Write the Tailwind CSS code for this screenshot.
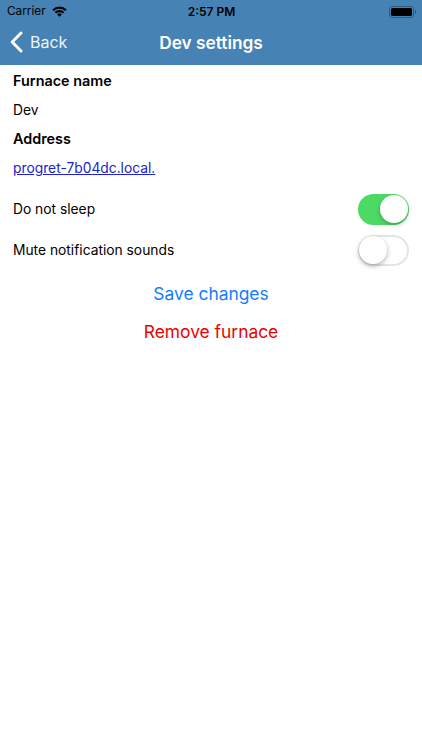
<!doctype html>
<html><head><meta charset="utf-8"><script src="https://cdn.jsdelivr.net/npm/@tailwindcss/browser@4"></script></head>
<body class="bg-white font-['Inter','Liberation_Sans',sans-serif]">
<div class="w-[422px] h-[750px] bg-white overflow-hidden flex flex-col">
  <header class="bg-[#4682b4] h-[65px] flex flex-col">
    <div class="h-[21px] mt-[1px] pl-[7px] pr-[6px] grid grid-cols-3 items-center text-[12px] text-black">
      <div class="flex items-center gap-[6px]"><span class="text-[11.8px]">Carrier</span>
        <svg width="15" height="11" viewBox="0 0 15 11"><path d="M0.3 3.6A10.2 10.2 0 0 1 14.7 3.6L13.2 5.1A8.1 8.1 0 0 0 1.8 5.1Z M2.7 6A6.8 6.8 0 0 1 12.3 6L10.8 7.5A4.7 4.7 0 0 0 4.2 7.5Z M5.1 8.4A3.4 3.4 0 0 1 9.9 8.4L7.5 10.8Z" fill="#000"/></svg>
      </div>
      <div class="text-center font-semibold whitespace-nowrap">2:57 PM</div>
      <div class="flex justify-end items-center">
        <div class="w-[25px] h-[12px] rounded-[3px] border border-[#2c5a80] p-[1px]"><div class="w-full h-full bg-black rounded-[1.5px]"></div></div>
        <div class="w-[1px] h-[4px] ml-[1px] bg-[#2c5a80]"></div>
      </div>
    </div>
    <div class="relative flex-1 flex items-center justify-center pb-[2px]">
      <div class="absolute left-[10px] top-[8px] flex items-center gap-[7px] text-white text-[16px]">
        <svg width="13" height="22" viewBox="0 0 13 22" fill="none"><path d="M11 2 2.2 11 11 20" stroke="#fff" stroke-width="2.9" stroke-linecap="round" stroke-linejoin="round"/></svg>
        <span class="text-[#eef4fa]">Back</span>
      </div>
      <h1 class="text-white text-[17.3px] font-semibold">Dev settings</h1>
    </div>
  </header>
  <main class="px-[13px] text-black text-[13.8px] flex flex-col">
    <p class="font-semibold text-[14.4px] leading-[20px] mt-[6px]">Furnace name</p>
    <p class="leading-[20px] mt-[9px]">Dev</p>
    <p class="font-semibold text-[14.4px] leading-[20px] mt-[9px]">Address</p>
    <a class="leading-[20px] mt-[9px] text-[#2222cc] underline">progret-7b04dc.local.</a>
    <div class="flex items-center justify-between h-[32px] mt-[15px]">
      <span>Do not sleep</span>
      <div class="w-[51px] h-[31px] rounded-full bg-[#4cd964] relative">
        <div class="absolute right-[1px] top-[1px] w-[28px] h-[28px] rounded-full bg-white shadow-[0_2px_4px_rgba(0,0,0,0.25)]"></div>
      </div>
    </div>
    <div class="flex items-center justify-between h-[32px] mt-[9px]">
      <span>Mute notification sounds</span>
      <div class="w-[51px] h-[31px] rounded-full bg-white border-2 border-[#e5e5e5] relative">
        <div class="absolute -left-[1px] -top-[1px] w-[28px] h-[28px] rounded-full bg-white shadow-[0_2px_5px_rgba(0,0,0,0.3)]"></div>
      </div>
    </div>
    <button class="text-[#147efb] text-[17.4px] leading-[24px] mt-[16px]">Save changes</button>
    <button class="text-[#ee0000] text-[17.4px] leading-[24px] mt-[14px]">Remove furnace</button>
  </main>
</div>
</body></html>
